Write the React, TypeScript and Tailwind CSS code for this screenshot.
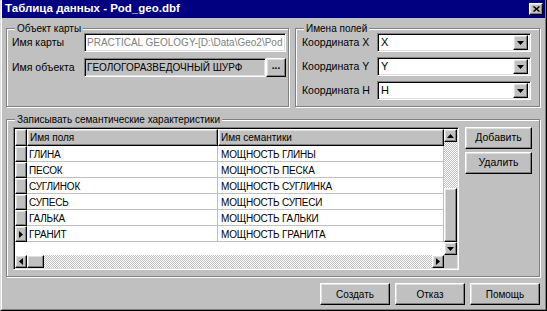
import React from "react";

const raised =
  "border border-t-white border-l-white border-r-black border-b-black shadow-[inset_-1px_-1px_0_#808080,inset_1px_1px_0_#dfdfdf] bg-[#c0c0c0]";
const sunken =
  "border border-t-[#808080] border-l-[#808080] border-r-white border-b-white shadow-[inset_1px_1px_0_#000,inset_-1px_-1px_0_#dfdfdf]";
const track =
  "bg-[image:repeating-conic-gradient(#c0c0c0_0_25%,#ffffff_0_50%)] bg-[length:2px_2px]";

function Tri({ dir }: { dir: "up" | "down" | "left" | "right" }) {
  const pts = {
    up: "0,4 7,4 3.5,0",
    down: "0,0 7,0 3.5,4",
    left: "4,0 4,7 0,3.5",
    right: "0,0 0,7 4,3.5",
  }[dir];
  const vert = dir === "up" || dir === "down";
  return (
    <svg width={vert ? 7 : 4} height={vert ? 4 : 7} viewBox={vert ? "0 0 7 4" : "0 0 4 7"}>
      <polygon points={pts} fill="#000" />
    </svg>
  );
}

function GroupBox({
  label,
  className,
  children,
}: {
  label: string;
  className?: string;
  children: React.ReactNode;
}) {
  return (
    <div
      className={`relative border border-[#808080] shadow-[inset_1px_1px_0_#fff,1px_1px_0_#fff] ${className ?? ""}`}
    >
      <span className="absolute -top-[7px] left-[8px] bg-[#c0c0c0] px-[2px] leading-[13px]">
        {label}
      </span>
      {children}
    </div>
  );
}

function Combo({ value }: { value: string }) {
  return (
    <div className={`flex h-[19px] w-[154px] items-center bg-white ${sunken}`}>
      <span className="flex-1 pl-[3px] text-[11px] leading-none">{value}</span>
      <div className={`mr-[2px] flex h-[15px] w-[15px] items-center justify-center ${raised}`}>
        <Tri dir="down" />
      </div>
    </div>
  );
}

const rows = [
  ["ГЛИНА", "МОЩНОСТЬ ГЛИНЫ"],
  ["ПЕСОК", "МОЩНОСТЬ ПЕСКА"],
  ["СУГЛИНОК", "МОЩНОСТЬ СУГЛИНКА"],
  ["СУПЕСЬ", "МОЩНОСТЬ СУПЕСИ"],
  ["ГАЛЬКА", "МОЩНОСТЬ ГАЛЬКИ"],
  ["ГРАНИТ", "МОЩНОСТЬ ГРАНИТА"],
];

export default function App() {
  return (
    <div className="h-[311px] w-[547px] border-l border-r border-b border-l-[#dfdfdf] border-r-black border-b-black bg-[#c0c0c0] font-['Liberation_Sans',Arial,sans-serif] text-[10px] text-black">
      <div className="flex h-[310px] flex-col border-l border-r border-b border-l-white border-r-[#808080] border-b-[#808080]">
        {/* title bar */}
        <div className="flex h-[18px] items-center bg-[#000080] pl-[3px] pr-[2px]">
          <span className="flex-1 text-[11.5px] font-bold text-white">Таблица данных - Pod_geo.dbf</span>
          <div className={`flex h-[12px] w-[14px] items-center justify-center ${raised}`}>
            <svg width="7" height="6" viewBox="0 0 7 6">
              <path d="M0.5 0.5 L6.5 5.5 M6.5 0.5 L0.5 5.5" stroke="#000" strokeWidth="1.5" />
            </svg>
          </div>
        </div>

        <div className="flex flex-1 flex-col px-[4px]">
          {/* top row */}
          <div className="mt-[10px] flex gap-[6px]">
            <GroupBox label="Объект карты" className="h-[79px] w-[283px]">
              <div className="flex flex-col gap-[6px] pl-[5px] pt-[4px]">
                <div className="flex h-[19px] items-center">
                  <span className="w-[72px] text-[10.5px]">Имя карты</span>
                  <div className={`flex h-[19px] w-[202px] items-center overflow-hidden bg-white ${sunken}`}>
                    <span className="whitespace-nowrap pl-[2px] text-[#808080]">
                      {"PRACTICAL GEOLOGY-[D:\\Data\\Geo2\\Pod"}
                    </span>
                  </div>
                </div>
                <div className="flex h-[19px] items-center">
                  <span className="w-[72px] text-[10.5px]">Имя объекта</span>
                  <div className={`flex h-[19px] w-[182px] items-center overflow-hidden bg-[#c0c0c0] ${sunken}`}>
                    <span className="whitespace-nowrap pl-[2px]">ГЕОЛОГОРАЗВЕДОЧНЫЙ ШУРФ</span>
                  </div>
                  <div className={`flex h-[19px] w-[20px] items-center justify-center leading-none ${raised}`}>
                    <span className="-mt-[3px] font-bold">...</span>
                  </div>
                </div>
              </div>
            </GroupBox>

            <GroupBox label="Имена полей" className="h-[79px] w-[245px]">
              <div className="flex flex-col gap-[5px] pl-[6px] pt-[4px]">
                {[
                  ["Координата X", "X"],
                  ["Координата Y", "Y"],
                  ["Координата H", "H"],
                ].map(([l, v]) => (
                  <div key={l} className="flex h-[19px] items-center">
                    <span className="w-[75px] text-[10.5px] text-[#000]">{l}</span>
                    <Combo value={v} />
                  </div>
                ))}
              </div>
            </GroupBox>
          </div>

          {/* semantics group */}
          <GroupBox
            label="Записывать семантические характеристики"
            className="mt-[12px] h-[158px] w-[534px]"
          >
            <div className="flex gap-[6px] pl-[6px] pt-[7px]">
              {/* grid */}
              <div className={`flex h-[143px] w-[446px] flex-col bg-white p-px ${sunken}`}>
                <div className="flex h-[126px]">
                  <div className="flex flex-1 flex-col">
                    <div className="flex h-[17px]">
                      <div className={`w-[12px] ${raised}`} />
                      <div className={`flex w-[191px] items-center pl-[2px] ${raised}`}>Имя поля</div>
                      <div className={`flex flex-1 items-center pl-[2px] ${raised}`}>Имя семантики</div>
                    </div>
                    {rows.map(([a, b], i) => (
                      <div key={a} className="flex h-[16px] tracking-[-0.2px]">
                        <div className={`flex w-[12px] items-center justify-center ${raised}`}>
                          {i === rows.length - 1 && <Tri dir="right" />}
                        </div>
                        <div className="flex w-[191px] items-center border-r border-b border-[#c0c0c0] pl-[2px] pt-[2px]">
                          {a}
                        </div>
                        <div className="flex flex-1 items-center border-r border-b border-[#c0c0c0] pl-[3px] pt-[2px]">
                          {b}
                        </div>
                      </div>
                    ))}
                  </div>
                  <div className="flex w-[13px] flex-col">
                    <div className={`flex h-[13px] items-center justify-center ${raised}`}>
                      <Tri dir="up" />
                    </div>
                    <div className={`h-[46px] ${track}`} />
                    <div className={`flex-1 ${raised}`} />
                    <div className={`flex h-[13px] items-center justify-center ${raised}`}>
                      <Tri dir="down" />
                    </div>
                  </div>
                </div>
                <div className="flex h-[13px]">
                  <div className={`flex w-[12px] items-center justify-center ${raised}`}>
                    <Tri dir="left" />
                  </div>
                  <div className={`w-[17px] ${raised}`} />
                  <div className={`flex-1 ${track}`} />
                  <div className={`flex w-[12px] items-center justify-center ${raised}`}>
                    <Tri dir="right" />
                  </div>
                  <div className="w-[13px] bg-[#c0c0c0]" />
                </div>
              </div>

              {/* side buttons */}
              <div className="flex flex-col gap-[3px] text-[10.5px]">
                <div className={`flex h-[22px] w-[67px] items-center justify-center ${raised}`}>Добавить</div>
                <div className={`flex h-[22px] w-[67px] items-center justify-center ${raised}`}>Удалить</div>
              </div>
            </div>
          </GroupBox>

          {/* bottom buttons */}
          <div className="mt-[6px] flex justify-end gap-[5px] pr-px">
            {["Создать", "Отказ", "Помощь"].map((t) => (
              <div key={t} className={`flex h-[22px] w-[70px] items-center justify-center ${raised}`}>
                {t}
              </div>
            ))}
          </div>
        </div>
      </div>
    </div>
  );
}
